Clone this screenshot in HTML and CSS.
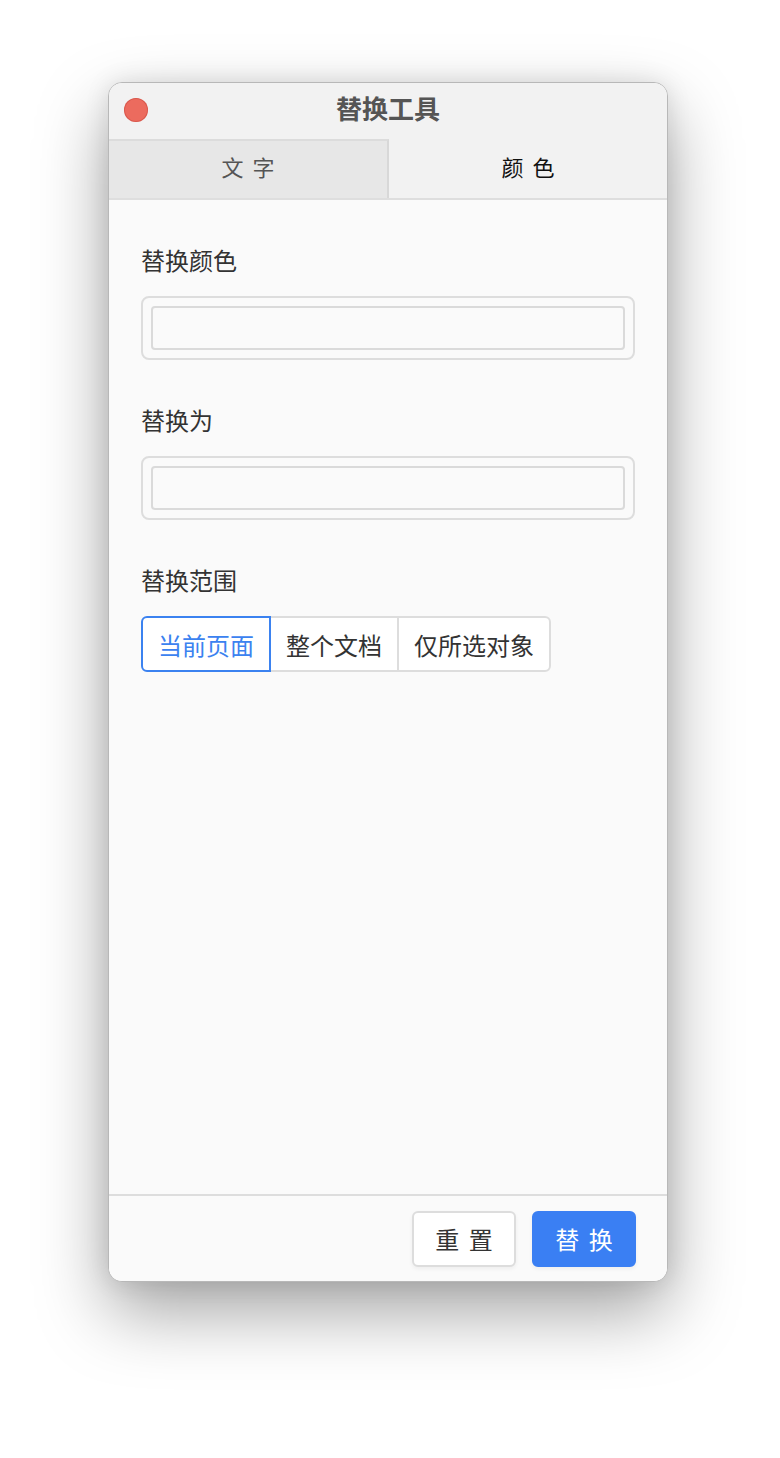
FILE: index.html
```html
<!DOCTYPE html>
<html lang="zh">
<head>
<meta charset="utf-8">
<link rel="stylesheet" href="styles.css">
</head>
<body>
<div class="window">
  <div class="titlebar">
    <span class="close"></span>
    <div class="title">替换工具</div>
  </div>
  <div class="tabs">
    <div class="tab">文 字</div>
    <div class="tab active">颜 色</div>
  </div>
  <div class="content">
    <div class="label">替换颜色</div>
    <div class="field"><div class="inner"></div></div>
    <div class="label">替换为</div>
    <div class="field"><div class="inner"></div></div>
    <div class="label">替换范围</div>
    <div class="segmented">
      <div class="seg selected">当前页面</div>
      <div class="seg">整个文档</div>
      <div class="seg">仅所选对象</div>
    </div>
  </div>
  <div class="footer">
    <button class="btn">重 置</button>
    <button class="btn primary">替 换</button>
  </div>
</div>
</body>
</html>
```

FILE: styles.css
```css
html, body {
  margin: 0;
  padding: 0;
  background: #ffffff;
}
body {
  font-family: "Noto Sans CJK SC", "Noto Sans", sans-serif;
  width: 780px;
  height: 1458px;
  overflow: hidden;
}
.window {
  margin: 82px 0 0 108px;
  width: 560px;
  height: 1200px;
  box-sizing: border-box;
  border-radius: 14px;
  border: 1px solid #b8b8b8;
  background: #fafafa;
  box-shadow: 0 30px 70px rgba(0,0,0,0.36), 0 0 24px rgba(0,0,0,0.10);
  display: flex;
  flex-direction: column;
  overflow: hidden;
}
.titlebar {
  height: 56px;
  background: #f2f2f2;
  display: flex;
  align-items: center;
  justify-content: center;
  position: relative;
  flex: none;
  padding-bottom: 6px;
  box-sizing: border-box;
}
.close {
  position: absolute;
  left: 15px;
  top: 15px;
  width: 24px;
  height: 24px;
  border-radius: 50%;
  background: #ec6b5e;
  box-shadow: inset 0 0 0 1px rgba(200,70,60,0.5);
}
.title {
  font-size: 26px;
  font-weight: 700;
  color: #555555;
  line-height: 30px;
}
.tabs {
  height: 61px;
  display: flex;
  background: #f2f2f2;
  border-bottom: 2px solid #dedede;
  flex: none;
  box-sizing: border-box;
}
.tab {
  flex: 1;
  display: flex;
  align-items: center;
  justify-content: center;
  font-size: 22px;
  color: #555555;
  letter-spacing: 2px;
  padding: 0 0 7px 2px;
}
.tab:not(.active) {
  background: #e7e7e7;
  border-top: 2px solid #dcdcdc;
  border-right: 2px solid #d8d8d8;
}
.tab.active {
  color: #111111;
  padding-bottom: 5px;
}
.content {
  flex: 1;
  padding: 44px 32px 0 32px;
  display: flex;
  flex-direction: column;
  align-items: stretch;
}
.label {
  font-size: 24px;
  line-height: 32px;
  color: #333333;
  margin-bottom: 20px;
}
.field {
  height: 64px;
  box-sizing: border-box;
  border: 2px solid #dddddd;
  border-radius: 8px;
  padding: 8px;
  margin-bottom: 44px;
  background: #fafafa;
}
.inner {
  height: 100%;
  box-sizing: border-box;
  border: 2px solid #dadada;
  border-radius: 4px;
  background: #fafafa;
}
.segmented {
  display: flex;
  align-self: flex-start;
  height: 56px;
  box-sizing: border-box;
}
.seg {
  display: flex;
  align-items: center;
  padding: 0 15px;
  font-size: 24px;
  color: #333333;
  background: #ffffff;
  border: 2px solid #dddddd;
  margin-left: -2px;
}
.seg:first-child {
  margin-left: 0;
  border-radius: 6px 0 0 6px;
}
.seg:last-child {
  border-radius: 0 6px 6px 0;
}
.seg.selected {
  color: #3b82f0;
  border-color: #3b82f0;
  position: relative;
  z-index: 1;
}
.footer {
  height: 87px;
  box-sizing: border-box;
  border-top: 2px solid #dddddd;
  display: flex;
  justify-content: flex-end;
  align-items: center;
  gap: 16px;
  padding: 0 31px 0 0;
  flex: none;
  background: #fafafa;
}
.btn {
  width: 104px;
  height: 56px;
  border-radius: 6px;
  font-family: "Noto Sans CJK SC", "Noto Sans", sans-serif;
  font-size: 24px;
  letter-spacing: 2px;
  padding: 0 0 0 2px;
  border: 2px solid #dddddd;
  background: #ffffff;
  color: #333333;
  box-shadow: 0 2px 4px rgba(0,0,0,0.05);
}
.btn.primary {
  background: #3a7ff3;
  border-color: #3a7ff3;
  color: #ffffff;
}
```
